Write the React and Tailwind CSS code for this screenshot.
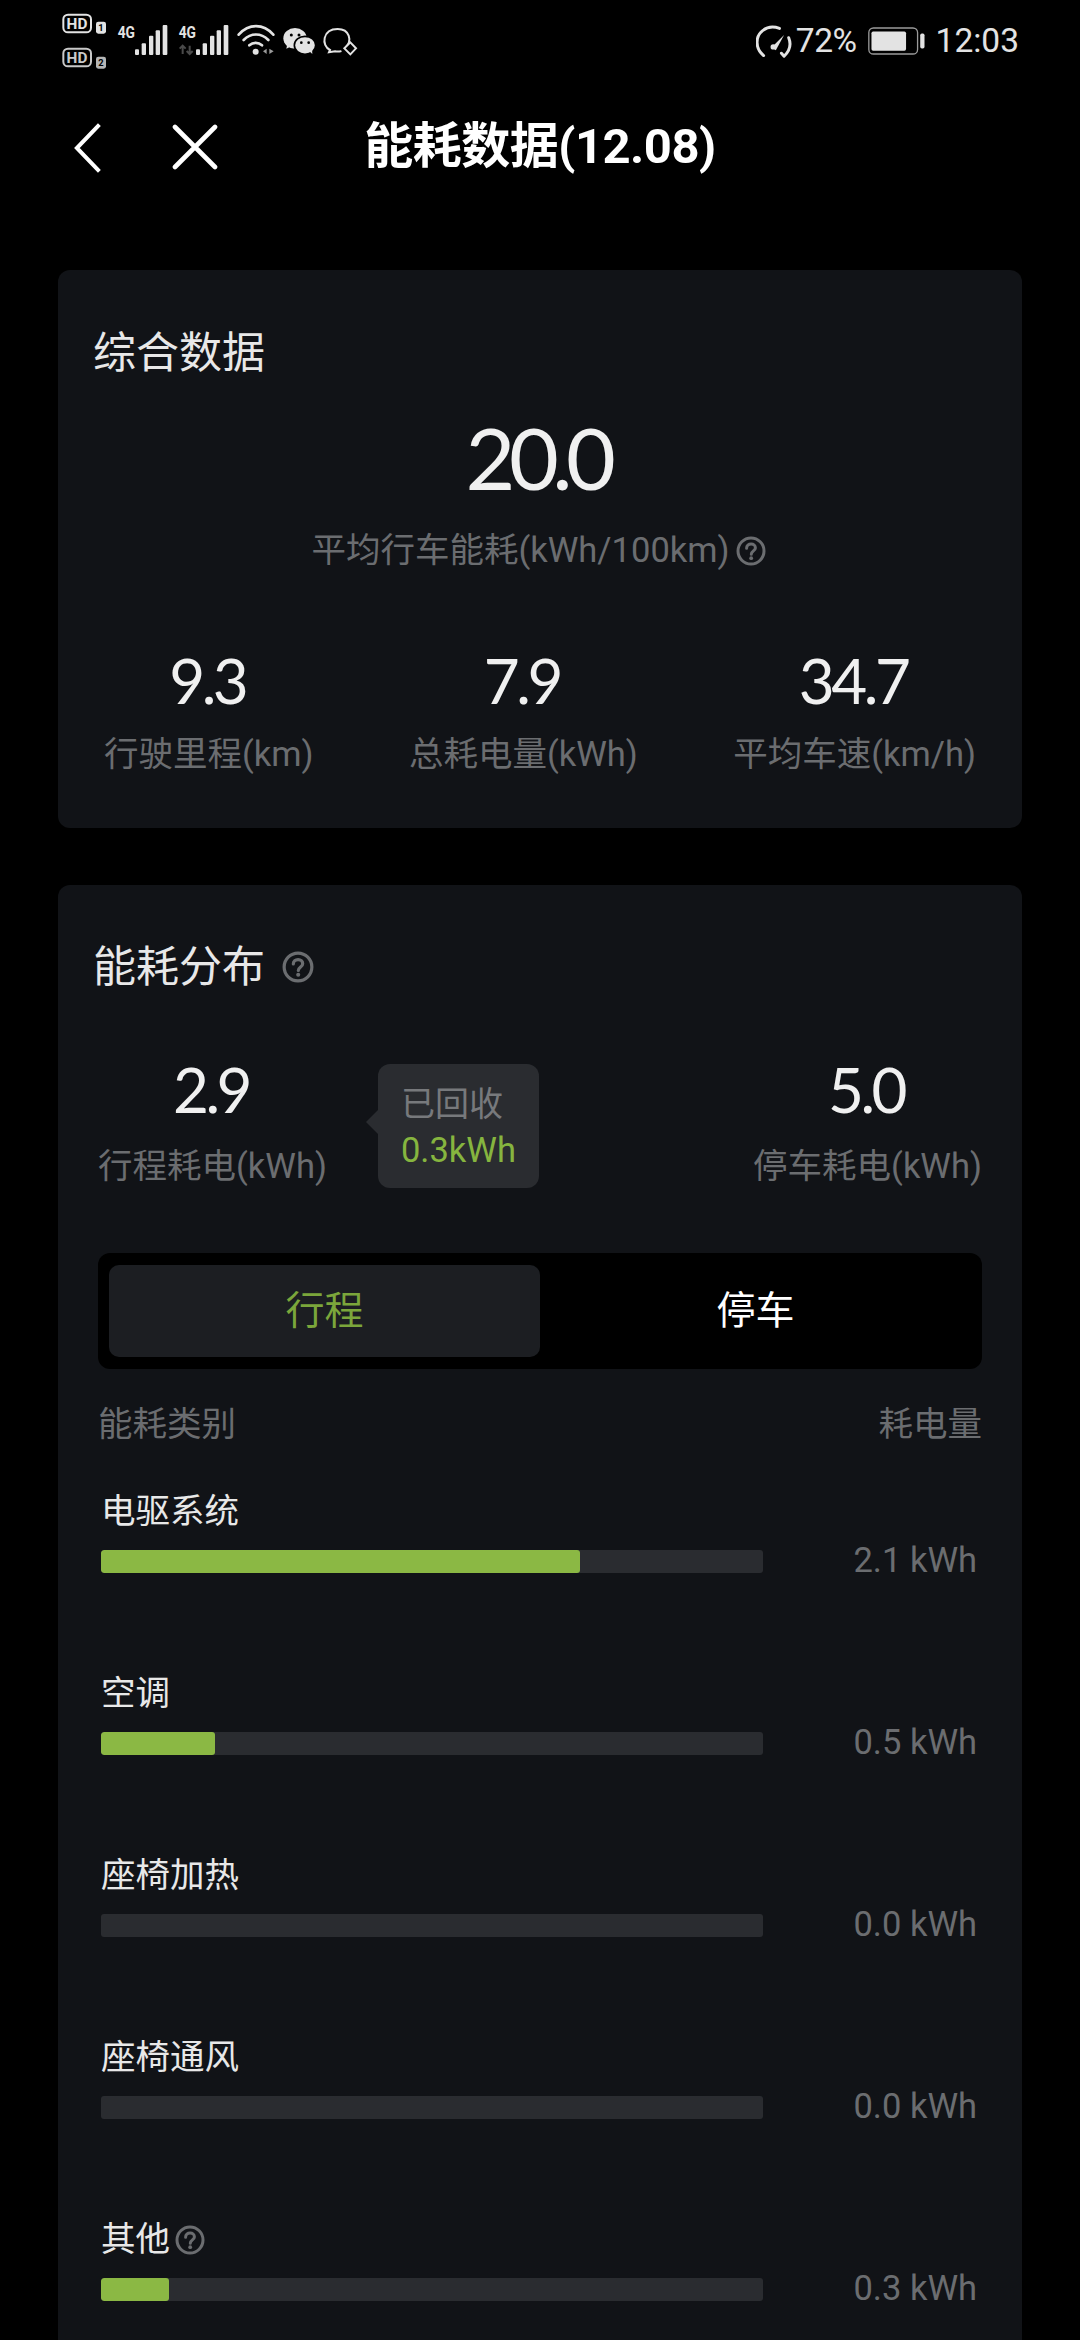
const rows = [
  { name: "电驱系统", width: 479, value: "2.1 kWh" },
  { name: "空调", width: 114, value: "0.5 kWh" },
  { name: "座椅加热", width: 0, value: "0.0 kWh" },
  { name: "座椅通风", width: 0, value: "0.0 kWh" },
  { name: "其他", width: 68, value: "0.3 kWh", help: true },
];

function Help({ className }) {
  return (
    <svg viewBox="0 0 30 30" className={className} fill="none">
      <circle cx="15" cy="15" r="13" stroke="#6b6d70" strokeWidth="3" />
      <path d="M10.6 12.2c0-2.5 2-4.1 4.5-4.1s4.3 1.6 4.3 3.8c0 3.1-4.1 3-4.1 6.4" stroke="#6b6d70" strokeWidth="3" strokeLinecap="round" />
      <circle cx="15.2" cy="22.2" r="1.9" fill="#6b6d70" />
    </svg>
  );
}

function StatusLeft() {
  const bars = [
    [285, 148, 12, 17], [305, 130, 13, 35], [327, 107, 13, 58], [347, 91, 13, 74], [368, 75, 14, 90],
  ];
  return (
    <svg viewBox="0 0 1080 240" className="w-[360px] h-[80px]" fill="none">
      <rect x="70" y="44" width="83" height="53" rx="14" stroke="#e3e3e3" strokeWidth="6" />
      <text x="111" y="86" textAnchor="middle" fontSize="46" fontWeight="700" fill="#e3e3e3" fontFamily="Roboto">HD</text>
      <rect x="168" y="65" width="30" height="36" rx="7" fill="#e3e3e3" />
      <text x="183" y="94" textAnchor="middle" fontSize="28" fontWeight="700" fill="#000" fontFamily="Roboto">1</text>
      <rect x="70" y="146" width="83" height="53" rx="14" stroke="#c9c9c9" strokeWidth="6" />
      <text x="111" y="188" textAnchor="middle" fontSize="46" fontWeight="700" fill="#c9c9c9" fontFamily="Roboto">HD</text>
      <rect x="168" y="170" width="30" height="36" rx="7" fill="#b5b5b5" />
      <text x="183" y="199" textAnchor="middle" fontSize="28" fontWeight="700" fill="#000" fontFamily="Roboto">2</text>

      <text x="233" y="113" fontSize="50" fontWeight="700" fill="#e3e3e3" fontFamily="Roboto" textLength="52" lengthAdjust="spacingAndGlyphs">4G</text>
      {bars.map(([x, y, w, h]) => <rect key={x} x={x} y={y} width={w} height={h} rx="3" fill="#e3e3e3" />)}

      <text x="416" y="113" fontSize="50" fontWeight="700" fill="#e3e3e3" fontFamily="Roboto" textLength="52" lengthAdjust="spacingAndGlyphs">4G</text>
      <path d="M428 162v-25m-9 9 9-9 9 9M449 137v25m-9-9 9 9 9-9" stroke="#4a4a4a" strokeWidth="6" />
      {bars.map(([x, y, w, h]) => <rect key={x} x={x + 183} y={y} width={w} height={h} rx="3" fill="#e3e3e3" />)}

      <path d="M596 104c30-34 74-34 104 0" stroke="#e3e3e3" strokeWidth="8" strokeLinecap="round" />
      <path d="M611 120c22-22 52-22 74 0" stroke="#e3e3e3" strokeWidth="8" strokeLinecap="round" />
      <path d="M628 136c11-10 27-10 38 0" stroke="#e3e3e3" strokeWidth="8" strokeLinecap="round" />
      <circle cx="647" cy="155" r="9" fill="#e3e3e3" />
      <path d="M680 146v16l-11-8zM688 146v16l13-8z" fill="#9a9a9a" />

      <ellipse cx="765" cy="115" rx="35" ry="31" fill="#e3e3e3" />
      <path d="M742 132l-3 14 17-8z" fill="#e3e3e3" />
      <circle cx="754" cy="105" r="4.5" fill="#000" />
      <circle cx="777" cy="105" r="4.5" fill="#000" />
      <ellipse cx="795" cy="136" rx="32" ry="27" fill="#e3e3e3" stroke="#000" strokeWidth="5" />
      <path d="M808 154l9 8-1-17z" fill="#e3e3e3" />
      <circle cx="784" cy="128" r="4" fill="#000" />
      <circle cx="806" cy="128" r="4" fill="#000" />

      <path d="M917 142c20-20 12-55-24-55-46 0-50 50-23 63l-3 7 18-3c6 1 12 1 17 0" stroke="#e3e3e3" strokeWidth="6" strokeLinecap="round" />
      <path d="M931 127l17 18-17 18-18-18z" fill="#000" stroke="#e3e3e3" strokeWidth="6" />
    </svg>
  );
}

function Gauge() {
  return (
    <svg viewBox="105 65 112 105" className="w-[37px] h-[35px]" fill="none">
      <path d="M128 160c-26-22-26-58-2-76 14-11 34-12 50-6" stroke="#e3e3e3" strokeWidth="9" strokeLinecap="round" />
      <path d="M204 106c8 20 5 38-14 56l-8-9" stroke="#e3e3e3" strokeWidth="9" strokeLinecap="round" strokeLinejoin="round" />
      <path d="M152 136l38-38-25 46z" fill="#e3e3e3" />
      <circle cx="157" cy="134" r="8" fill="#e3e3e3" />
    </svg>
  );
}

function Battery() {
  return (
    <svg viewBox="440 78 176 85" className="w-[59px] h-[28px]" fill="none">
      <rect x="444" y="81" width="148" height="79" rx="14" stroke="#9a9a9a" strokeWidth="4" />
      <rect x="452" y="92" width="105" height="58" rx="5" fill="#e3e3e3" />
      <rect x="600" y="98" width="13" height="45" rx="5" fill="#e3e3e3" />
    </svg>
  );
}

function Stat({ value, label, labelGap = "mt-[17px]" }) {
  return (
    <div className="flex flex-col items-center">
      <div className="h-[70px] leading-[70px] pr-[3px] text-[62px] tracking-[-3.5px] text-[#f0f0f0] font-['Lato',sans-serif]">{value}</div>
      <div className={`${labelGap} h-[44px] leading-[44px] text-[34.5px] text-[#6b6d70] whitespace-nowrap`}>{label}</div>
    </div>
  );
}

export default function App() {
  return (
    <div className="w-[1080px] h-[2340px] overflow-hidden bg-black font-['Roboto','Noto_Sans_CJK_SC',sans-serif]">
      <div className="h-[72px] flex items-start justify-between pl-[40px] pr-[61px] text-[#e3e3e3] text-[33.5px]">
        <div className="h-[72px]"><StatusLeft /></div>
        <div className="flex items-center mt-[16px]">
          <Gauge />
          <span className="ml-[3px] tracking-[-0.5px]">72%</span>
          <span className="ml-[10px]"><Battery /></span>
          <span className="ml-[10px]">12:03</span>
        </div>
      </div>

      <div className="h-[148px] relative flex items-center justify-center">
        <svg viewBox="0 0 40 60" className="absolute left-[71px] top-[50px] w-[36px] h-[52px]" fill="none">
          <path d="M32 3 6 30l26 27" stroke="#fff" strokeWidth="4.6" />
        </svg>
        <svg viewBox="0 0 46 46" className="absolute left-[172px] top-[52px] w-[46px] h-[46px]" fill="none">
          <path d="M3 3l40 40M43 3 3 43" stroke="#fff" strokeWidth="4.6" strokeLinecap="round" />
        </svg>
        <h1 className="mt-[2px] text-[49px] font-bold text-white whitespace-nowrap tracking-[-0.5px]">能耗数据(12.08)</h1>
      </div>

      <div className="mt-[50px] mx-[58px] flex flex-col gap-[57px]">
        <section className="h-[558px] bg-[#111317] rounded-[12px] pt-[57px]">
          <h2 className="ml-[35px] h-[52px] leading-[52px] text-[43px] text-[#e8e8e8]">综合数据</h2>
          <div className="mt-[28px] mb-[4px] h-[100px] leading-[100px] pr-[5px] text-center text-[86px] tracking-[-6.5px] text-[#f0f0f0] font-['Lato',sans-serif]">20.0</div>
          <div className="mt-[22px] pr-[3px] h-[44px] flex items-center justify-center gap-[6px] text-[34.5px] text-[#6b6d70]">
            <span>平均行车能耗(kWh/100km)</span>
            <Help className="w-[30px] h-[30px]" />
          </div>
          <div className="mt-[72px] px-[46px] flex justify-between">
            <Stat value="9.3" label="行驶里程(km)" />
            <Stat value="7.9" label="总耗电量(kWh)" />
            <Stat value="34.7" label="平均车速(km/h)" />
          </div>
        </section>

        <section className="bg-[#111317] rounded-[12px] pt-[56px] pb-[200px]">
          <div className="ml-[35px] h-[52px] flex items-center gap-[17px]">
            <h2 className="text-[43px] text-[#e8e8e8]">能耗分布</h2>
            <Help className="w-[32px] h-[32px]" />
          </div>

          <div className="mt-[61px] px-[40px] flex items-start">
            <Stat value="2.9" label="行程耗电(kWh)" labelGap="mt-[20px]" />
            <div className="relative ml-[51px] mt-[10px] w-[161px] h-[124px] bg-[#2a2c30] rounded-[12px] pl-[23px] pt-[17px]">
              <div className="absolute left-[-12px] top-[46px] w-0 h-0 border-y-[12px] border-y-transparent border-r-[12px] border-r-[#2a2c30]" />
              <div className="h-[46px] leading-[46px] text-[34px] text-[#77797c]">已回收</div>
              <div className="h-[46px] leading-[46px] text-[34.5px] text-[#86b53f]">0.3kWh</div>
            </div>
            <div className="ml-auto"><Stat value="5.0" label="停车耗电(kWh)" labelGap="mt-[20px]" /></div>
          </div>

          <div className="mt-[65px] mx-[40px] h-[116px] bg-black rounded-[12px] px-[11px] py-[12px] flex">
            <div className="w-[431px] h-[92px] bg-[#1c1e22] rounded-[10px] flex items-center justify-center text-[39px] text-[#7ba63b]">行程</div>
            <div className="w-[431px] h-[92px] flex items-center justify-center text-[39px] text-white">停车</div>
          </div>

          <div className="mt-[34px] mx-[40px] h-[44px] flex items-center justify-between text-[34.5px] text-[#6b6d70]">
            <span>能耗类别</span>
            <span>耗电量</span>
          </div>

          <div className="mt-[43px] pl-[43px] pr-[45px] flex flex-col gap-[99px]">
            {rows.map((row) => (
              <div key={row.name}>
                <div className="h-[44px] flex items-center gap-[5px] text-[34.5px] text-[#e8e8e8]">
                  <span>{row.name}</span>
                  {row.help && <Help className="w-[30px] h-[30px]" />}
                </div>
                <div className="mt-[16px] h-[23px] flex items-center justify-between">
                  <div className="w-[662px] h-[23px] bg-[#2a2c30] rounded-[3px] overflow-hidden">
                    <div className="h-full bg-[#8bb844] rounded-[3px]" style={{ width: row.width }} />
                  </div>
                  <span className="text-[34.5px] text-[#6b6d70] -mt-[2px]">{row.value}</span>
                </div>
              </div>
            ))}
          </div>
        </section>
      </div>
    </div>
  );
}
